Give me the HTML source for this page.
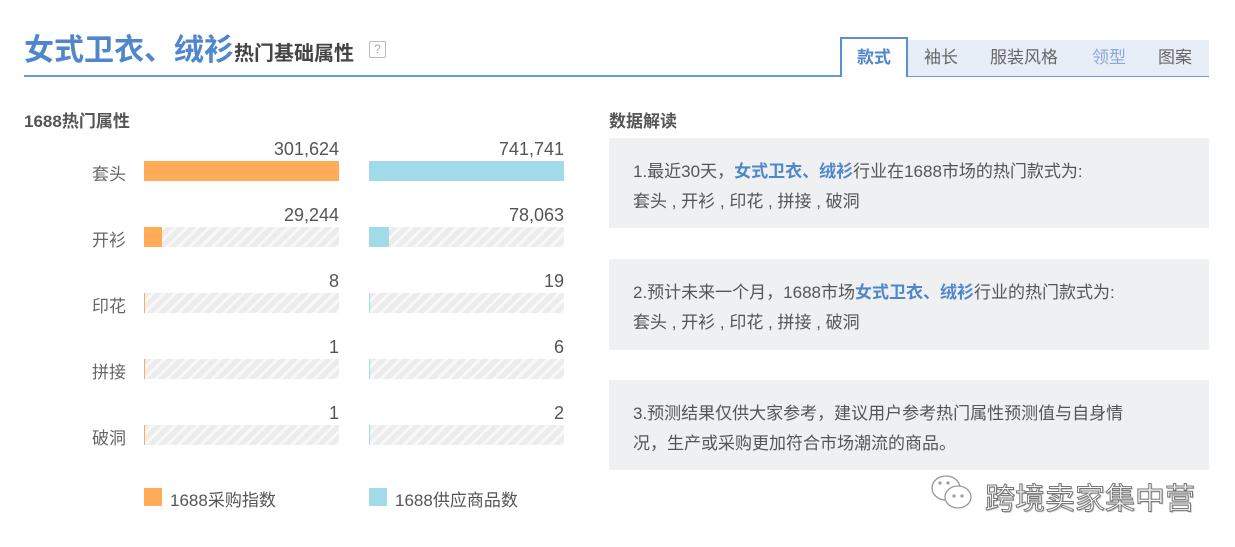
<!DOCTYPE html>
<html><head><meta charset="utf-8"><style>
*{margin:0;padding:0;box-sizing:border-box}
body{width:1235px;height:547px;background:#fff;position:relative;overflow:hidden;font-family:"Liberation Sans","Noto Sans CJK SC",sans-serif;color:#555}
.a{position:absolute;white-space:nowrap}
.title{left:24px;top:25px;font-size:30px;font-weight:bold;color:#4f86cc;letter-spacing:0}
.title span{font-size:20px;color:#444;letter-spacing:0}
.q{left:369px;top:41px;width:17px;height:17px;border:1px solid #bbb;color:#aaa;font-size:12px;text-align:center;line-height:15px;border-radius:2px}
.hline{left:24px;top:75px;width:1185px;height:2px;background:#6a9ad8}
.tabs{left:840px;top:40px;width:369px;height:36px;background:#e8eef8}
.tab{position:absolute;top:0;height:36px;line-height:36px;font-size:17px;color:#666}
.act{left:0;width:68px;background:#fff;border:2px solid #5a8fd4;border-bottom:none;top:-3px;height:40px;color:#4f86cc;text-align:center;line-height:38px;font-weight:bold}
.h2{font-size:17px;font-weight:bold;color:#555}
.lbl{font-size:17px;color:#666;left:92px}
.num{font-size:18px;color:#555;text-align:right;width:195px}
.bar{width:195px;height:20px;background:repeating-linear-gradient(135deg,#ececec 0 5px,#f8f8f8 5px 8px)}
.bar i{display:block;height:20px}
.o{background:#ffab58}.b{background:#a1dbe9}
.box{left:609px;width:600px;background:#eff0f2}
.box p{position:absolute;left:24px;font-size:17px;color:#555;white-space:nowrap}
.bl{color:#4f86cc;font-weight:bold}
</style></head><body>
<div class="a title">女式卫衣、绒衫<span>热门基础属性</span></div>
<div class="a q">?</div>
<div class="a hline"></div>
<div class="a tabs">
<div class="tab act">款式</div>
<div class="tab" style="left:84px">袖长</div>
<div class="tab" style="left:150px">服装风格</div>
<div class="tab" style="left:252px;color:#8aa8d8">领型</div>
<div class="tab" style="left:318px">图案</div>
</div>

<div class="a h2" style="left:24px;top:107px">1688热门属性</div>
<div class="a h2" style="left:609px;top:107px">数据解读</div>

<div class="a num" style="left:144px;top:139px">301,624</div><div class="a num" style="left:369px;top:139px">741,741</div>
<div class="a lbl" style="top:160px">套头</div>
<div class="a bar" style="left:144px;top:161px"><i class="o" style="width:195px"></i></div>
<div class="a bar" style="left:369px;top:161px"><i class="b" style="width:195px"></i></div>

<div class="a num" style="left:144px;top:205px">29,244</div><div class="a num" style="left:369px;top:205px">78,063</div>
<div class="a lbl" style="top:226px">开衫</div>
<div class="a bar" style="left:144px;top:227px"><i class="o" style="width:18px"></i></div>
<div class="a bar" style="left:369px;top:227px"><i class="b" style="width:20px"></i></div>

<div class="a num" style="left:144px;top:271px">8</div><div class="a num" style="left:369px;top:271px">19</div>
<div class="a lbl" style="top:292px">印花</div>
<div class="a bar" style="left:144px;top:293px"><i class="o" style="width:1px"></i></div>
<div class="a bar" style="left:369px;top:293px"><i class="b" style="width:1px"></i></div>

<div class="a num" style="left:144px;top:337px">1</div><div class="a num" style="left:369px;top:337px">6</div>
<div class="a lbl" style="top:358px">拼接</div>
<div class="a bar" style="left:144px;top:359px"><i class="o" style="width:1px"></i></div>
<div class="a bar" style="left:369px;top:359px"><i class="b" style="width:1px"></i></div>

<div class="a num" style="left:144px;top:403px">1</div><div class="a num" style="left:369px;top:403px">2</div>
<div class="a lbl" style="top:424px">破洞</div>
<div class="a bar" style="left:144px;top:425px"><i class="o" style="width:1px"></i></div>
<div class="a bar" style="left:369px;top:425px"><i class="b" style="width:1px"></i></div>

<div class="a o" style="left:144px;top:488px;width:18px;height:18px"></div>
<div class="a" style="left:170px;top:486px;font-size:17px;color:#555">1688采购指数</div>
<div class="a b" style="left:369px;top:488px;width:18px;height:18px"></div>
<div class="a" style="left:395px;top:486px;font-size:17px;color:#555">1688供应商品数</div>

<div class="a box" style="top:138px;height:90px">
<p style="top:19px">1.最近30天，<span class="bl">女式卫衣、绒衫</span>行业在1688市场的热门款式为:</p>
<p style="top:49px">套头 , 开衫 , 印花 , 拼接 , 破洞</p></div>
<div class="a box" style="top:259px;height:91px">
<p style="top:19px">2.预计未来一个月，1688市场<span class="bl">女式卫衣、绒衫</span>行业的热门款式为:</p>
<p style="top:49px">套头 , 开衫 , 印花 , 拼接 , 破洞</p></div>
<div class="a box" style="top:380px;height:90px">
<p style="top:19px">3.预测结果仅供大家参考，建议用户参考热门属性预测值与自身情</p>
<p style="top:49px">况，生产或采购更加符合市场潮流的商品。</p></div>

<svg class="a" style="left:928px;top:472px" width="50" height="42" viewBox="0 0 50 42" fill="none" stroke="#999" stroke-width="1.3">
<ellipse cx="18" cy="16" rx="14" ry="12"/><ellipse cx="30" cy="25" rx="13" ry="11" fill="#fff"/>
<circle cx="26" cy="24" r="1"/><circle cx="34" cy="24" r="1"/><circle cx="12" cy="11" r="1"/><circle cx="20" cy="11" r="1"/>
</svg>
<div class="a" style="left:985px;top:474px;font-size:30px;color:#fff;-webkit-text-stroke:1px #777;text-shadow:1px 1px 1px #aaa">跨境卖家集中营</div>
</body></html>
